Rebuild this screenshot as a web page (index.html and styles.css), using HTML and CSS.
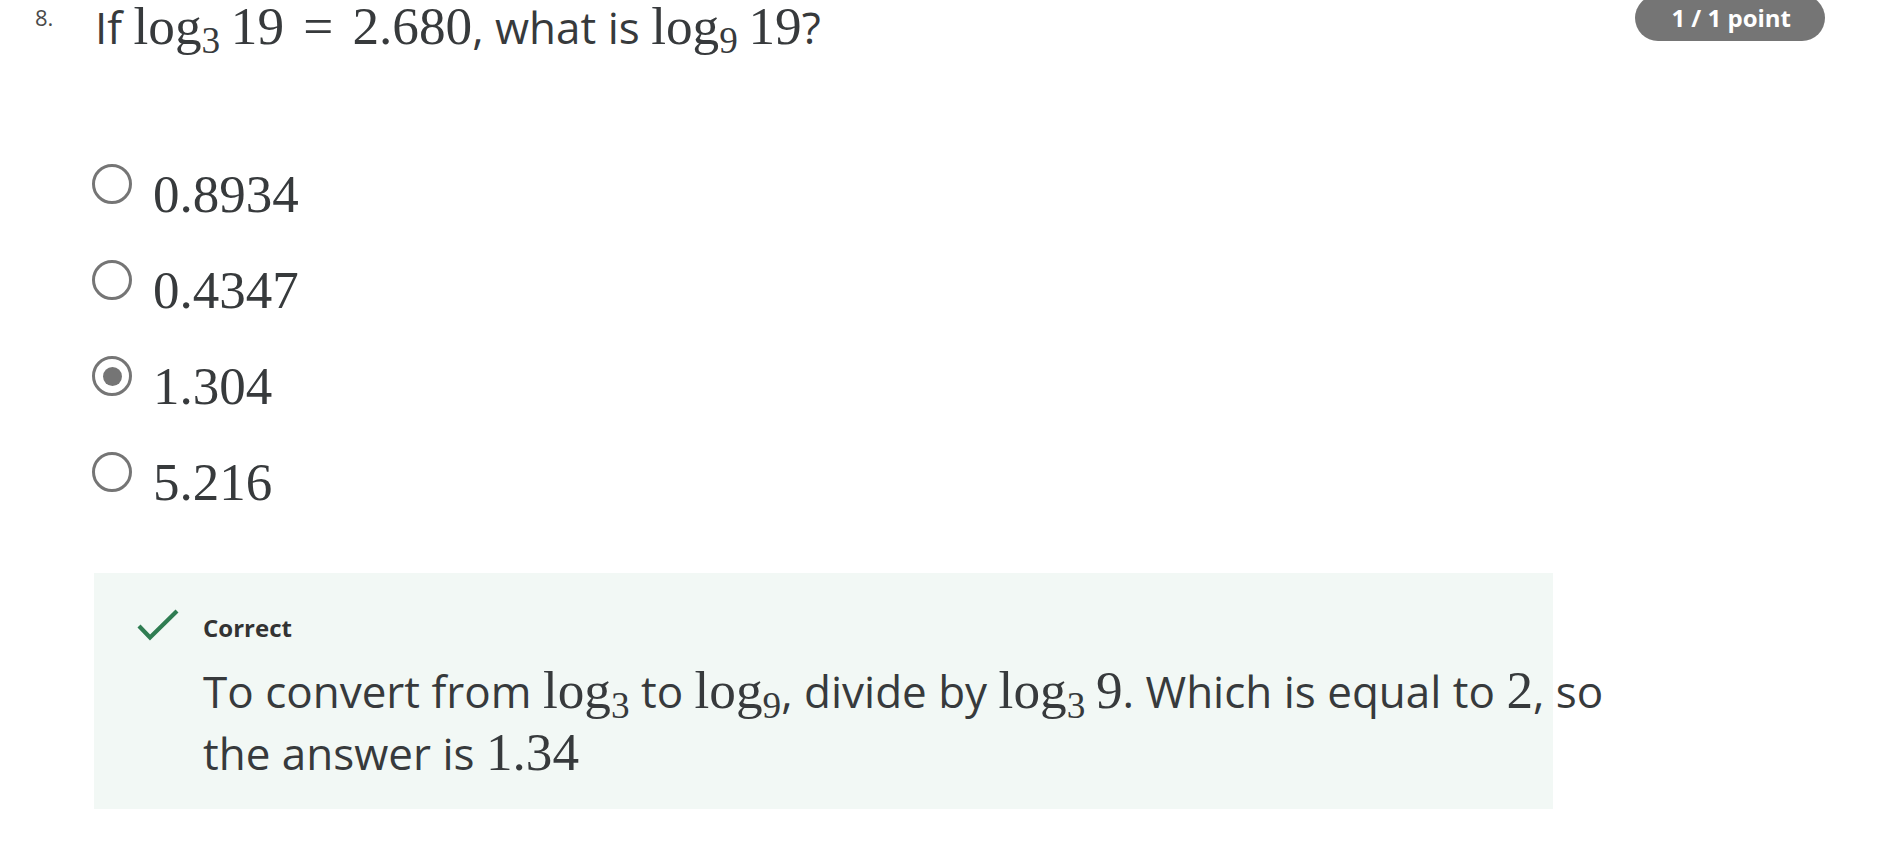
FILE: index.html
```html
<!DOCTYPE html>
<html lang="en">
<head>
<meta charset="utf-8">
<title>Question 8</title>
<link rel="stylesheet" href="styles.css">
</head>
<body>
<div class="question">
  <div class="q-head">
    <span class="q-num">8.</span>
    <div class="q-text">If <span class="m"><span class="op">log<sub>3</sub></span>19<span class="rel">=</span>2.680</span>, what is <span class="m"><span class="op">log<sub>9</sub></span>19</span>?</div>
    <span class="badge">1 / 1 point</span>
  </div>

  <ul class="options">
    <li class="option"><span class="radio"></span><span class="m opt-m">0.8934</span></li>
    <li class="option"><span class="radio"></span><span class="m opt-m">0.4347</span></li>
    <li class="option"><span class="radio checked"></span><span class="m opt-m">1.304</span></li>
    <li class="option"><span class="radio"></span><span class="m opt-m">5.216</span></li>
  </ul>

  <div class="feedback">
    <div class="fb-head">
      <svg class="check" viewBox="0 0 44 34" width="44" height="34" aria-hidden="true">
        <path d="M3 17 L14 28.5 L41 2" fill="none" stroke="#2f7d52" stroke-width="4.2"/>
      </svg>
      <span class="fb-title">Correct</span>
    </div>
    <p class="fb-text">To convert from <span class="m">log<sub>3</sub></span> to <span class="m">log<sub>9</sub></span>, divide by <span class="m"><span class="op">log<sub>3</sub></span>9</span>. Which is equal to <span class="m">2</span>, so the answer is <span class="m">1.34</span></p>
  </div>
</div>
</body>
</html>
```

FILE: styles.css
```css
html, body {
  margin: 0;
  padding: 0;
  background: #ffffff;
}

body {
  font-family: "Open Sans", "Noto Sans", sans-serif;
  color: #373a3c;
}

.question {
  padding: 0 69px 0 0;
}

.q-head {
  display: flex;
  align-items: flex-start;
}

.q-num {
  font-size: 22px;
  line-height: 30px;
  margin: 2px 0 0 35px;
  color: #4a4a4a;
  width: 60px;
}

.q-text {
  font-size: 44px;
  line-height: 50px;
  color: #373a3c;
}

.m {
  font-family: "Liberation Serif", "Times New Roman", serif;
  font-size: 1.21em;
  line-height: 1;
  white-space: nowrap;
}

.m sub {
  font-size: 0.7em;
  line-height: 1;
  vertical-align: baseline;
  position: relative;
  top: 0.25em;
}

.op {
  margin-right: 0.2em;
}

.rel {
  margin: 0 0.36em;
}

.badge {
  margin-left: auto;
  margin-top: -5px;
  height: 46px;
  line-height: 46px;
  padding: 0 34px 0 36px;
  border-radius: 23px;
  background: #757575;
  color: #ffffff;
  font-size: 24px;
  font-weight: 700;
  white-space: nowrap;
}

.options {
  list-style: none;
  margin: 110px 0 0 92px;
  padding: 0;
  display: flex;
  flex-direction: column;
  gap: 34px;
}

.option {
  display: flex;
  align-items: flex-start;
  gap: 21px;
  height: 62px;
}

.radio {
  box-sizing: border-box;
  width: 40px;
  height: 40px;
  margin-top: 1px;
  border: 3.5px solid #757575;
  border-radius: 50%;
  display: flex;
  align-items: center;
  justify-content: center;
  flex: none;
}

.radio.checked::after {
  content: "";
  width: 19px;
  height: 19px;
  border-radius: 50%;
  background: #757575;
}

.opt-m {
  font-size: 53px;
  line-height: 62px;
  color: #373a3c;
}

.feedback {
  box-sizing: border-box;
  margin: 60px 0 0 94px;
  width: 1459px;
  height: 236px;
  background: #f2f8f5;
  padding: 38px 0 0 42px;
}

.fb-head {
  display: flex;
  align-items: center;
  gap: 23px;
  height: 33px;
}

.check {
  flex: none;
  margin-top: -4px;
}

.fb-title {
  font-size: 24px;
  font-weight: 700;
  line-height: 33px;
  color: #333333;
}

.fb-text {
  margin: 16px 0 0 67px;
  width: 1440px;
  font-size: 44px;
  line-height: 62px;
  color: #373a3c;
}
```
